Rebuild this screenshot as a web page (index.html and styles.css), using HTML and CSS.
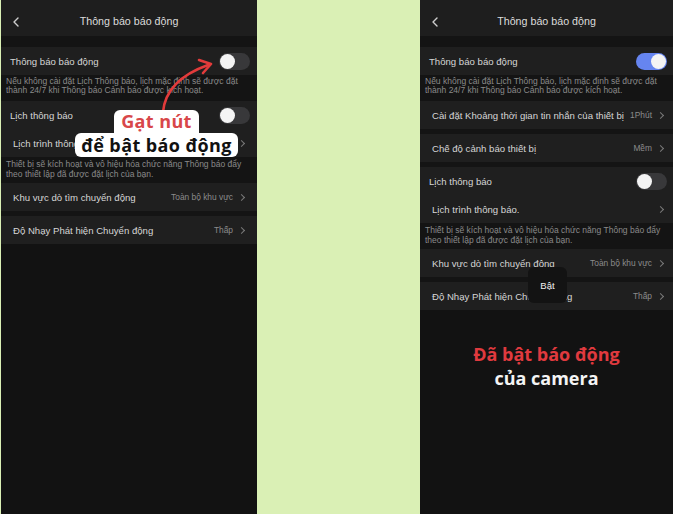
FILE: index.html
```html
<!DOCTYPE html>
<html lang="vi">
<head>
<meta charset="utf-8">
<link rel="stylesheet" href="styles.css">
</head>
<body>
<div class="screen">
  <section class="phone phone-left">
    <header class="nav">
      <svg class="back" width="8" height="10" viewBox="0 0 8 10"><path d="M6 1 L2 5 L6 9" fill="none" stroke="#cfcfcf" stroke-width="1.4" stroke-linecap="round" stroke-linejoin="round"/></svg>
      <h1 class="title">Thông báo báo động</h1>
    </header>
    <div class="list">
      <div class="row row-toggle"><span class="label">Thông báo báo động</span><span class="switch"></span></div>
      <p class="desc">Nếu không cài đặt Lịch Thông báo, lịch mặc định sẽ được đặt<br>thành 24/7 khi Thông báo Cảnh báo được kích hoạt.</p>
      <div class="row row-toggle"><span class="label">Lịch thông báo</span><span class="switch"></span></div>
      <div class="row"><span class="label">Lịch trình thông báo.</span><span class="chev"></span></div>
      <p class="desc desc-b">Thiết bị sẽ kích hoạt và vô hiệu hóa chức năng Thông báo đẩy<br>theo thiết lập đã được đặt lịch của bạn.</p>
      <div class="row"><span class="label">Khu vực dò tìm chuyển động</span><span class="value">Toàn bộ khu vực</span><span class="chev"></span></div>
      <div class="gap"></div>
      <div class="row"><span class="label">Độ Nhạy Phát hiện Chuyển động</span><span class="value">Thấp</span><span class="chev"></span></div>
    </div>
    <svg class="arrow" width="257" height="130" viewBox="0 0 257 130">
      <path d="M163 112 Q166 80 208 65" fill="none" stroke="#e23b3b" stroke-width="2.6" stroke-linecap="round"/>
      <path d="M199 60 L211 64 L203 73" fill="none" stroke="#e23b3b" stroke-width="2.6" stroke-linecap="round" stroke-linejoin="round"/>
    </svg>
    <div class="callout">
      <span class="callout-top">Gạt nút</span>
      <span class="callout-bottom">để bật báo động</span>
    </div>
  </section>

  <div class="divider"></div>

  <section class="phone phone-right">
    <header class="nav">
      <svg class="back" width="8" height="10" viewBox="0 0 8 10"><path d="M6 1 L2 5 L6 9" fill="none" stroke="#cfcfcf" stroke-width="1.4" stroke-linecap="round" stroke-linejoin="round"/></svg>
      <h1 class="title">Thông báo báo động</h1>
    </header>
    <div class="list">
      <div class="row row-toggle"><span class="label">Thông báo báo động</span><span class="switch on"></span></div>
      <p class="desc">Nếu không cài đặt Lịch Thông báo, lịch mặc định sẽ được đặt<br>thành 24/7 khi Thông báo Cảnh báo được kích hoạt.</p>
      <div class="row"><span class="label">Cài đặt Khoảng thời gian tin nhắn của thiết bị</span><span class="value">1Phút</span><span class="chev"></span></div>
      <div class="gap"></div>
      <div class="row"><span class="label">Chế độ cảnh báo thiết bị</span><span class="value">Mềm</span><span class="chev"></span></div>
      <div class="gap"></div>
      <div class="row row-toggle"><span class="label">Lịch thông báo</span><span class="switch"></span></div>
      <div class="row"><span class="label">Lịch trình thông báo.</span><span class="chev"></span></div>
      <p class="desc desc-b">Thiết bị sẽ kích hoạt và vô hiệu hóa chức năng Thông báo đẩy<br>theo thiết lập đã được đặt lịch của bạn.</p>
      <div class="row"><span class="label">Khu vực dò tìm chuyển động</span><span class="value">Toàn bộ khu vực</span><span class="chev"></span></div>
      <div class="gap"></div>
      <div class="row"><span class="label">Độ Nhạy Phát hiện Chuyển động</span><span class="value">Thấp</span><span class="chev"></span></div>
    </div>
    <div class="toast">Bật</div>
    <div class="caption">
      <span class="caption-red">Đã bật báo động</span>
      <span class="caption-white">của camera</span>
    </div>
  </section>
</div>
</body>
</html>
```

FILE: styles.css
```css
* { box-sizing: border-box; margin: 0; padding: 0; }

html, body {
  width: 673px;
  height: 514px;
  overflow: hidden;
  background: #daf0b5;
  font-family: "Liberation Sans", Arial, sans-serif;
}

.screen {
  display: flex;
  width: 673px;
  height: 514px;
}

.phone {
  position: relative;
  height: 514px;
  background: #121212;
  overflow: hidden;
}

.phone-left { width: 256px; margin-left: 1px; }
.divider { width: 163px; background: #daf0b5; }
.phone-right { width: 253px; }

.nav {
  height: 36px;
  background: #1e1e1e;
  display: flex;
  align-items: center;
  justify-content: center;
  position: relative;
  padding-top: 6px;
}

.back {
  position: absolute;
  left: 11px;
  top: 17px;
}

.title {
  font-size: 10.7px;
  font-weight: normal;
  color: #dcdcdc;
}

.list {
  padding-top: 11px;
  background: #141414;
}

.row {
  height: 28px;
  background: #1f1f1f;
  display: flex;
  align-items: center;
  padding: 0 11px 0 12px;
  color: #d6d6d6;
  font-size: 9.6px;
}

.phone-right .row { padding-right: 8px; }

.row-toggle { padding: 0 6px 0 9px; }
.phone-left .row-toggle { padding-right: 7px; }
.phone-right .row-toggle { padding-right: 6px; }

.label {
  flex: 1;
  white-space: nowrap;
}

.value {
  color: #8c8c8c;
  font-size: 8.4px;
  margin-left: 4px;
  margin-right: 6px;
  white-space: nowrap;
}

.chev {
  width: 5px;
  height: 5px;
  border-top: 1px solid #7a7a7a;
  border-right: 1px solid #7a7a7a;
  transform: rotate(45deg);
  margin-right: 2px;
}

.switch {
  width: 31px;
  height: 17px;
  border-radius: 9px;
  background: #38383a;
  position: relative;
}

.switch::after {
  content: "";
  position: absolute;
  top: 1px;
  left: 1px;
  width: 15px;
  height: 15px;
  border-radius: 50%;
  background: #f4f4f4;
}

.switch.on { background: #6685f0; }
.switch.on::after { left: 15px; }

.desc {
  height: 26px;
  padding: 2px 0 0 5px;
  font-size: 8.5px;
  line-height: 9px;
  color: #8a8a8a;
  white-space: nowrap;
  background: #141414;
}

.desc-b { height: 26px; padding-top: 3px; line-height: 9.5px; }

.gap { height: 5px; background: #141414; }

.arrow {
  position: absolute;
  left: -1px;
  top: 0;
}

.callout {
  position: absolute;
  left: 0;
  width: 311px;
  top: 110px;
  display: flex;
  flex-direction: column;
  align-items: center;
  font-family: "Open Sans", sans-serif;
  font-weight: 700;
  letter-spacing: 0.4px;
}

.callout-top {
  background: #fff;
  color: #d8474a;
  font-size: 18px;
  line-height: 23px;
  padding: 0 7px;
  border-radius: 6px 6px 0 0;
}

.callout-bottom {
  background: #fff;
  color: #111;
  font-size: 18px;
  line-height: 24px;
  padding: 0 6px;
  border-radius: 6px;
}

.toast {
  position: absolute;
  left: 108px;
  top: 267px;
  width: 39px;
  height: 36px;
  border-radius: 6px;
  background: #131313;
  color: #f0f0f0;
  font-size: 9.5px;
  display: flex;
  align-items: center;
  justify-content: center;
}

.caption {
  position: absolute;
  left: 0;
  right: 0;
  top: 342px;
  display: flex;
  flex-direction: column;
  align-items: center;
  font-family: "Open Sans", sans-serif;
  font-weight: 700;
  font-size: 18px;
  line-height: 24px;
}

.caption-red { color: #e03a3f; }
.caption-white { color: #f4f4f4; }
```
